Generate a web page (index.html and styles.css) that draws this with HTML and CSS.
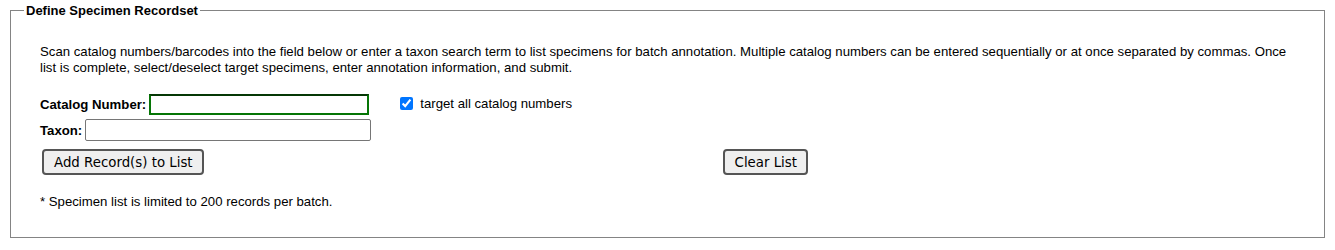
FILE: index.html
```html
<!DOCTYPE html>
<html>
<head>
<meta charset="utf-8">
<link rel="stylesheet" href="styles.css">
</head>
<body>
<fieldset class="recordset">
  <legend class="legend">Define Specimen Recordset</legend>
  <div class="content">
    <p class="intro">Scan catalog numbers/barcodes into the field below or enter a taxon search term to list specimens for batch annotation. Multiple catalog numbers can be entered sequentially or at once separated by commas. Once list is complete, select/deselect target specimens, enter annotation information, and submit.</p>
    <div class="fields">
      <div class="field-col">
        <div class="field-row">
          <label class="field-label" for="catnum">Catalog Number:</label>
          <input class="input input-catalog" id="catnum" type="text">
        </div>
        <div class="field-row">
          <label class="field-label" for="taxon">Taxon:</label>
          <input class="input input-taxon" id="taxon" type="text">
        </div>
      </div>
      <label class="target">
        <input class="checkbox" type="checkbox" checked>
        <span>target all catalog numbers</span>
      </label>
    </div>
    <div class="buttons">
      <button class="btn" type="button">Add Record(s) to List</button>
      <button class="btn btn-clear" type="button">Clear List</button>
    </div>
    <p class="note">* Specimen list is limited to 200 records per batch.</p>
  </div>
</fieldset>
</body>
</html>
```

FILE: styles.css
```css
body {
  margin: 3px 8px 8px;
  font-family: "Liberation Sans", Arial, sans-serif;
  font-size: 13.2px;
  color: #000;
  background: #fff;
}
.recordset {
  margin: 0 2px;
  padding: 0 12px 28px 12px;
  border: 1px solid #848484;
}
.legend {
  font-weight: bold;
  font-size: 13px;
  padding: 0 2px;
  margin-left: 1px;
}
.content {
  padding: 0 16px 0 17px;
}
.intro {
  margin: 26px 0 0;
  line-height: 16px;
}
.fields {
  display: flex;
  align-items: flex-start;
  margin-top: 18px;
}
.field-col {
  display: flex;
  flex-direction: column;
  gap: 4px;
}
.field-row {
  display: flex;
  align-items: center;
  gap: 3px;
}
.field-label {
  font-weight: bold;
}
.input {
  box-sizing: border-box;
  height: 22px;
  border: 1px solid #767676;
  border-radius: 2px;
  padding: 1px 2px;
  margin: 0;
  font: 13px "Liberation Sans", Arial, sans-serif;
}
.input-catalog {
  width: 220px;
  height: 21px;
  border: 2px solid #067506;
  border-top-color: #053805;
  border-radius: 0;
}
.input-taxon {
  width: 286px;
}
.target {
  display: flex;
  align-items: center;
  gap: 7px;
  margin-left: 29px;
  margin-top: 2px;
}
.checkbox {
  margin: 0;
  width: 13px;
  height: 13px;
  accent-color: #0075ff;
}
.buttons {
  display: flex;
  margin-top: 8px;
}
.btn {
  box-sizing: border-box;
  height: 26px;
  margin: 0 0 0 2px;
  padding: 0 9px 0 10px;
  font: 13.33px "DejaVu Sans", Verdana, sans-serif;
  color: #000;
  background: #efefef;
  border: 2px solid #555;
  border-radius: 4px;
}
.btn-clear {
  margin-left: 519px;
}
.note {
  margin: 19px 0 0;
}
```
